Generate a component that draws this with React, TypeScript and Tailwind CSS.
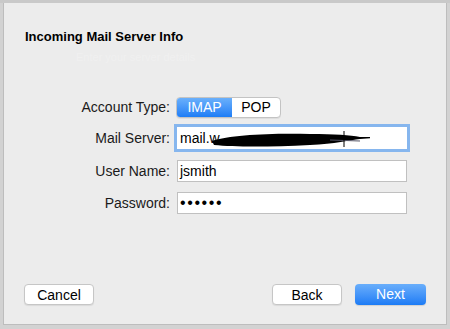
import React from "react";

const font = { fontFamily: '"Liberation Sans", Arial, sans-serif' };

const Label: React.FC<{ children: React.ReactNode }> = ({ children }) => (
  <div className="w-[166px] text-right text-[14px] text-[#1a1a1a]">{children}</div>
);

export default function App() {
  return (
    <div className="relative h-[329px] w-[450px] overflow-hidden bg-[#d2d2d2]" style={font}>
      <div className="h-[3px] w-full bg-[#c9c9c9]" />
      <div className="ml-[3px] flex h-[322px] w-[444px] flex-col border-x border-b border-[#bdbdbd] bg-[#ececec]">
        <div className="pl-[21px] pt-[24px] text-[13px] font-bold text-black">Incoming Mail Server Info</div>
        <div className="pl-[72px] pt-[2px] text-[11px] text-[#f0f0f0]">Enter your server details</div>

        <div className="mt-[32px] flex flex-col">
          {/* account type */}
          <div className="flex h-[21px] items-center">
            <Label>Account Type:</Label>
            <div className="ml-[6px] flex h-[21px] overflow-hidden rounded-[4px] border border-[#c3c3c3] bg-white text-[14px] shadow-[0_1px_0_rgba(0,0,0,0.06)]">
              <div className="flex w-[55px] items-center justify-center bg-gradient-to-b from-[#6ab0fb] to-[#1c7df6] text-white">
                IMAP
              </div>
              <div className="flex w-[48px] items-center justify-center text-black">POP</div>
            </div>
          </div>

          {/* mail server */}
          <div className="mt-[9px] flex h-[22px] items-center">
            <Label>Mail Server:</Label>
            <div className="relative ml-[7px] flex h-[22px] w-[230px] items-center bg-white pl-[3px] text-[14px] text-black ring-[3px] ring-[#86b6ee]">
              mail.w
              <svg className="absolute left-[33px] top-[3px]" width="160" height="18" viewBox="0 0 160 18">
                <path
                  d="M2 11 C 20 5, 60 3, 100 4 C 125 4, 140 5, 150 7 L 178 7 L 150 9 C 140 10, 125 14, 100 15 C 60 17, 25 17, 4 15 Z"
                  fill="#000"
                />
                <path d="M120 10 L 150 11" stroke="#556" strokeWidth="1" />
                <line x1="134" y1="1" x2="134" y2="17" stroke="#000" strokeWidth="1" />
              </svg>
            </div>
          </div>

          {/* user name */}
          <div className="mt-[11px] flex h-[22px] items-center">
            <Label>User Name:</Label>
            <div className="ml-[7px] flex h-[22px] w-[230px] items-center border border-[#c0c0c0] bg-white pl-[2px] text-[14px] text-black">
              jsmith
            </div>
          </div>

          {/* password */}
          <div className="mt-[10px] flex h-[22px] items-center">
            <Label>Password:</Label>
            <div className="ml-[7px] flex h-[22px] w-[230px] items-center border border-[#c0c0c0] bg-white pl-[2px] text-[16px] leading-none tracking-[1.6px] text-black">
              ••••••
            </div>
          </div>
        </div>

        <div className="mt-auto mb-[19px] flex items-center px-[20px]">
          <button className="h-[21px] w-[70px] rounded-[4px] border border-[#c6c6c6] bg-white text-[14px] text-black shadow-[0_1px_1px_rgba(0,0,0,0.08)]">
            Cancel
          </button>
          <div className="flex-1" />
          <button className="h-[21px] w-[70px] rounded-[4px] border border-[#c6c6c6] bg-white text-[14px] text-black shadow-[0_1px_1px_rgba(0,0,0,0.08)]">
            Back
          </button>
          <button className="ml-[13px] h-[21px] w-[71px] rounded-[4px] bg-gradient-to-b from-[#69aefb] to-[#1a7bf5] text-[14px] text-white shadow-[0_1px_1px_rgba(0,0,0,0.12)]">
            Next
          </button>
        </div>
      </div>
    </div>
  );
}
